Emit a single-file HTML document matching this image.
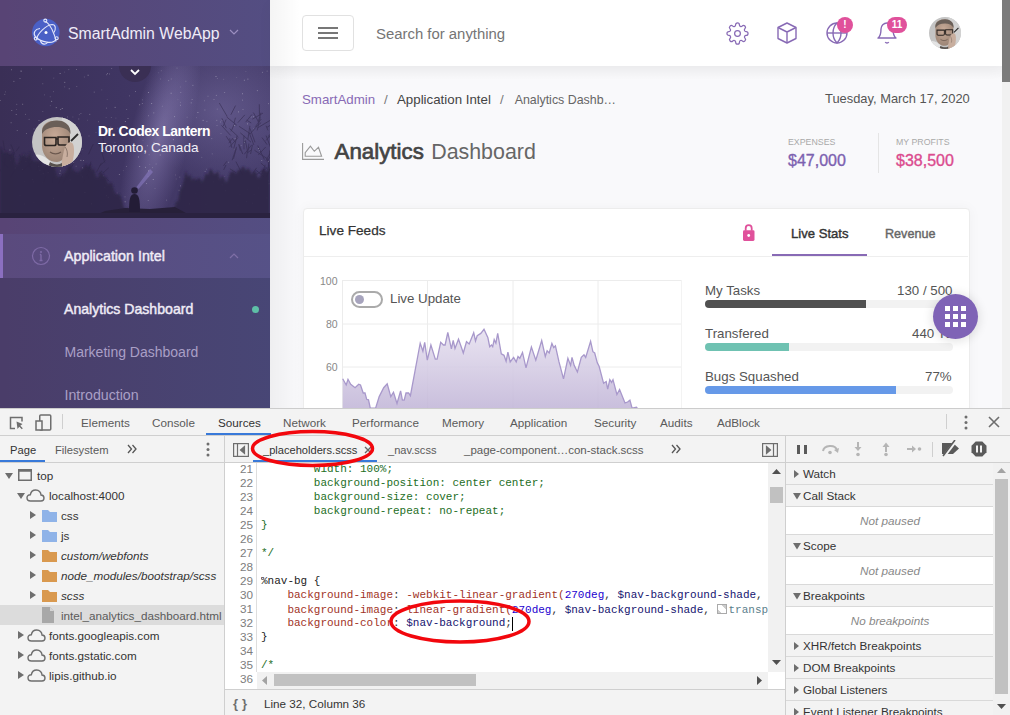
<!DOCTYPE html>
<html><head><meta charset="utf-8">
<style>
*{margin:0;padding:0;box-sizing:border-box}
html,body{width:1010px;height:715px;overflow:hidden;background:#f9f9fb;font-family:"Liberation Sans",sans-serif;position:relative}
.a{position:absolute;white-space:nowrap}
</style></head><body>
<div class="a" style="left:0px;top:0px;width:270px;height:66px;background:linear-gradient(270deg,rgba(51,148,225,.12),rgba(51,148,225,0)) #584475;"></div>
<div class="a" style="left:0;top:66px;width:270px;height:152px;overflow:hidden;background:linear-gradient(90deg,#3a2f56 0%,#3f3562 45%,#483f6e 100%)"><svg width="270" height="152" style="position:absolute;left:0;top:0"><defs>
<filter id="bl" x="-10%" y="-10%" width="120%" height="120%"><feGaussianBlur stdDeviation="1.3"/></filter>
<filter id="bl2"><feGaussianBlur stdDeviation="0.5"/></filter>
<radialGradient id="mw"><stop offset="0" stop-color="#a296cc" stop-opacity=".5"/><stop offset=".55" stop-color="#9286c0" stop-opacity=".25"/><stop offset="1" stop-color="#9286c0" stop-opacity="0"/></radialGradient>
<radialGradient id="mw2"><stop offset="0" stop-color="#8c82ba" stop-opacity=".38"/><stop offset="1" stop-color="#8c82ba" stop-opacity="0"/></radialGradient>
</defs>
<ellipse cx="220" cy="45" rx="80" ry="70" fill="url(#mw2)"/>
<ellipse cx="160" cy="70" rx="30" ry="120" fill="url(#mw)" transform="rotate(14 160 70)"/>
<rect x="64.4" y="15.9" width="0.8" height="0.8" fill="#fff" opacity="0.51"/><rect x="211.8" y="87.5" width="0.8" height="0.8" fill="#fff" opacity="0.29"/><rect x="73.3" y="95.9" width="0.8" height="0.8" fill="#fff" opacity="0.38"/><rect x="159.8" y="88.6" width="0.8" height="0.8" fill="#fff" opacity="0.45"/><rect x="51.3" y="34.9" width="0.8" height="0.8" fill="#fff" opacity="0.54"/><rect x="247.2" y="123.0" width="0.8" height="0.8" fill="#fff" opacity="0.17"/><rect x="16.4" y="37.9" width="0.8" height="0.8" fill="#fff" opacity="0.32"/><rect x="168.3" y="14.3" width="0.8" height="0.8" fill="#fff" opacity="0.37"/><rect x="19.6" y="12.1" width="0.8" height="0.8" fill="#fff" opacity="0.42"/><rect x="148.7" y="88.4" width="0.8" height="0.8" fill="#fff" opacity="0.30"/><rect x="129.2" y="29.5" width="0.8" height="0.8" fill="#fff" opacity="0.29"/><rect x="201.1" y="117.4" width="0.8" height="0.8" fill="#fff" opacity="0.18"/><rect x="32.3" y="113.3" width="0.8" height="0.8" fill="#fff" opacity="0.40"/><rect x="207.6" y="29.8" width="0.8" height="0.8" fill="#fff" opacity="0.32"/><rect x="69.7" y="113.4" width="0.8" height="0.8" fill="#fff" opacity="0.30"/><rect x="176.5" y="138.5" width="0.8" height="0.8" fill="#fff" opacity="0.28"/><rect x="148.1" y="104.5" width="0.8" height="0.8" fill="#fff" opacity="0.52"/><rect x="115.5" y="51.7" width="0.8" height="0.8" fill="#fff" opacity="0.19"/><rect x="236.3" y="11.0" width="0.8" height="0.8" fill="#fff" opacity="0.18"/><rect x="152.3" y="67.9" width="0.8" height="0.8" fill="#fff" opacity="0.42"/><rect x="80.7" y="108.6" width="0.8" height="0.8" fill="#fff" opacity="0.18"/><rect x="57.6" y="92.7" width="0.8" height="0.8" fill="#fff" opacity="0.18"/><rect x="82.0" y="101.5" width="0.8" height="0.8" fill="#fff" opacity="0.43"/><rect x="76.4" y="20.0" width="0.8" height="0.8" fill="#fff" opacity="0.29"/><rect x="196.0" y="51.3" width="0.8" height="0.8" fill="#fff" opacity="0.20"/><rect x="191.5" y="79.7" width="0.8" height="0.8" fill="#fff" opacity="0.52"/><rect x="253.8" y="127.9" width="0.8" height="0.8" fill="#fff" opacity="0.33"/><rect x="216.8" y="42.7" width="0.8" height="0.8" fill="#fff" opacity="0.28"/><rect x="107.9" y="130.9" width="0.8" height="0.8" fill="#fff" opacity="0.51"/><rect x="67.0" y="50.6" width="0.8" height="0.8" fill="#fff" opacity="0.30"/><rect x="98.1" y="55.4" width="0.8" height="0.8" fill="#fff" opacity="0.31"/><rect x="52.6" y="78.9" width="0.8" height="0.8" fill="#fff" opacity="0.47"/><rect x="146.0" y="117.1" width="0.8" height="0.8" fill="#fff" opacity="0.38"/><rect x="47.7" y="106.3" width="0.8" height="0.8" fill="#fff" opacity="0.50"/><rect x="76.0" y="3.1" width="0.8" height="0.8" fill="#fff" opacity="0.36"/><rect x="146.9" y="79.4" width="0.8" height="0.8" fill="#fff" opacity="0.54"/><rect x="175.8" y="112.6" width="0.8" height="0.8" fill="#fff" opacity="0.18"/><rect x="147.6" y="110.3" width="0.8" height="0.8" fill="#fff" opacity="0.18"/><rect x="22.1" y="103.2" width="0.8" height="0.8" fill="#fff" opacity="0.51"/><rect x="22.9" y="88.8" width="0.8" height="0.8" fill="#fff" opacity="0.21"/><rect x="201.4" y="90.9" width="0.8" height="0.8" fill="#fff" opacity="0.25"/><rect x="59.5" y="107.1" width="0.8" height="0.8" fill="#fff" opacity="0.36"/><rect x="206.5" y="55.2" width="0.8" height="0.8" fill="#fff" opacity="0.29"/><rect x="261.4" y="94.1" width="0.8" height="0.8" fill="#fff" opacity="0.35"/><rect x="145.1" y="100.9" width="0.8" height="0.8" fill="#fff" opacity="0.43"/><rect x="247.0" y="57.5" width="0.8" height="0.8" fill="#fff" opacity="0.48"/><rect x="180.0" y="119.5" width="0.8" height="0.8" fill="#fff" opacity="0.47"/><rect x="225.1" y="124.4" width="0.8" height="0.8" fill="#fff" opacity="0.53"/><rect x="172.9" y="73.3" width="0.8" height="0.8" fill="#fff" opacity="0.43"/><rect x="216.6" y="59.0" width="0.8" height="0.8" fill="#fff" opacity="0.32"/><rect x="39.5" y="103.8" width="0.8" height="0.8" fill="#fff" opacity="0.55"/><rect x="101.4" y="23.5" width="0.8" height="0.8" fill="#fff" opacity="0.23"/><rect x="114.7" y="40.9" width="0.8" height="0.8" fill="#fff" opacity="0.54"/><rect x="16.0" y="43.2" width="0.8" height="0.8" fill="#fff" opacity="0.20"/><rect x="175.0" y="108.6" width="0.8" height="0.8" fill="#fff" opacity="0.22"/><rect x="16.8" y="64.2" width="0.8" height="0.8" fill="#fff" opacity="0.38"/><rect x="245.5" y="5.1" width="0.8" height="0.8" fill="#fff" opacity="0.19"/><rect x="49.8" y="30.4" width="0.8" height="0.8" fill="#fff" opacity="0.24"/><rect x="193.7" y="83.3" width="0.8" height="0.8" fill="#fff" opacity="0.24"/><rect x="49.9" y="39.3" width="0.8" height="0.8" fill="#fff" opacity="0.22"/><rect x="204.5" y="43.6" width="0.8" height="0.8" fill="#fff" opacity="0.37"/><rect x="220.6" y="67.1" width="0.8" height="0.8" fill="#fff" opacity="0.25"/><rect x="239.6" y="128.0" width="0.8" height="0.8" fill="#fff" opacity="0.29"/><rect x="147.8" y="134.0" width="0.8" height="0.8" fill="#fff" opacity="0.34"/><rect x="59.7" y="7.0" width="0.8" height="0.8" fill="#fff" opacity="0.53"/><rect x="216.4" y="53.9" width="0.8" height="0.8" fill="#fff" opacity="0.36"/><rect x="139.3" y="38.4" width="0.8" height="0.8" fill="#fff" opacity="0.55"/><rect x="177.5" y="33.3" width="0.8" height="0.8" fill="#fff" opacity="0.15"/><rect x="127.6" y="52.0" width="0.8" height="0.8" fill="#fff" opacity="0.47"/><rect x="192.6" y="84.9" width="0.8" height="0.8" fill="#fff" opacity="0.21"/><rect x="42.4" y="45.1" width="0.8" height="0.8" fill="#fff" opacity="0.25"/><rect x="234.7" y="72.3" width="0.8" height="0.8" fill="#fff" opacity="0.40"/><rect x="268.1" y="37.3" width="0.8" height="0.8" fill="#fff" opacity="0.36"/><rect x="40.7" y="107.9" width="0.8" height="0.8" fill="#fff" opacity="0.15"/><rect x="221.8" y="118.5" width="0.8" height="0.8" fill="#fff" opacity="0.48"/><rect x="22.3" y="37.8" width="0.8" height="0.8" fill="#fff" opacity="0.44"/><rect x="26.2" y="67.2" width="0.8" height="0.8" fill="#fff" opacity="0.34"/><rect x="258.0" y="82.1" width="0.8" height="0.8" fill="#fff" opacity="0.49"/><rect x="82.0" y="110.5" width="0.8" height="0.8" fill="#fff" opacity="0.32"/><rect x="247.5" y="12.7" width="0.8" height="0.8" fill="#fff" opacity="0.48"/><rect x="56.3" y="76.1" width="0.8" height="0.8" fill="#fff" opacity="0.36"/><rect x="42.5" y="116.5" width="0.8" height="0.8" fill="#fff" opacity="0.27"/><rect x="83.9" y="10.6" width="0.8" height="0.8" fill="#fff" opacity="0.27"/><rect x="126.2" y="100.1" width="0.8" height="0.8" fill="#fff" opacity="0.29"/><rect x="185.5" y="14.8" width="0.8" height="0.8" fill="#fff" opacity="0.31"/><rect x="124.7" y="135.4" width="0.8" height="0.8" fill="#fff" opacity="0.48"/><rect x="176.6" y="1.7" width="0.8" height="0.8" fill="#fff" opacity="0.30"/><rect x="191.7" y="33.2" width="0.8" height="0.8" fill="#fff" opacity="0.38"/><rect x="123.7" y="1.5" width="0.8" height="0.8" fill="#fff" opacity="0.55"/><rect x="215.9" y="28.9" width="0.8" height="0.8" fill="#fff" opacity="0.40"/><rect x="78.4" y="52.6" width="0.8" height="0.8" fill="#fff" opacity="0.37"/><rect x="80.5" y="47.2" width="0.8" height="0.8" fill="#fff" opacity="0.31"/><rect x="180.0" y="35.9" width="0.8" height="0.8" fill="#fff" opacity="0.23"/><rect x="197.5" y="46.1" width="0.8" height="0.8" fill="#fff" opacity="0.53"/><rect x="152.0" y="101.3" width="0.8" height="0.8" fill="#fff" opacity="0.28"/><rect x="223.3" y="12.9" width="0.8" height="0.8" fill="#fff" opacity="0.21"/><rect x="25.5" y="94.9" width="0.8" height="0.8" fill="#fff" opacity="0.43"/><rect x="48.6" y="56.3" width="0.8" height="0.8" fill="#fff" opacity="0.48"/><rect x="160.0" y="12.6" width="0.8" height="0.8" fill="#fff" opacity="0.24"/><rect x="42.4" y="17.4" width="0.8" height="0.8" fill="#fff" opacity="0.31"/><rect x="19.6" y="128.9" width="0.8" height="0.8" fill="#fff" opacity="0.32"/><rect x="138.1" y="90.6" width="0.8" height="0.8" fill="#fff" opacity="0.46"/><rect x="221.7" y="54.0" width="0.8" height="0.8" fill="#fff" opacity="0.28"/><rect x="111.3" y="2.2" width="0.8" height="0.8" fill="#fff" opacity="0.31"/><rect x="189.0" y="137.5" width="0.8" height="0.8" fill="#fff" opacity="0.47"/><rect x="178.3" y="85.2" width="0.8" height="0.8" fill="#fff" opacity="0.16"/><rect x="89.4" y="47.9" width="0.8" height="0.8" fill="#fff" opacity="0.41"/><rect x="28.7" y="52.9" width="0.8" height="0.8" fill="#fff" opacity="0.35"/><rect x="212.9" y="115.5" width="0.8" height="0.8" fill="#fff" opacity="0.39"/><rect x="42.8" y="107.3" width="0.8" height="0.8" fill="#fff" opacity="0.51"/><rect x="148.0" y="49.4" width="0.8" height="0.8" fill="#fff" opacity="0.35"/><rect x="38.3" y="99.9" width="0.8" height="0.8" fill="#fff" opacity="0.54"/><rect x="139.3" y="100.2" width="0.8" height="0.8" fill="#fff" opacity="0.48"/><rect x="53.2" y="132.3" width="0.8" height="0.8" fill="#fff" opacity="0.40"/><rect x="53.4" y="11.7" width="0.8" height="0.8" fill="#fff" opacity="0.25"/><rect x="155.7" y="97.6" width="0.8" height="0.8" fill="#fff" opacity="0.28"/><rect x="250.8" y="50.6" width="0.8" height="0.8" fill="#fff" opacity="0.34"/><rect x="33.5" y="136.3" width="0.8" height="0.8" fill="#fff" opacity="0.20"/><rect x="244.1" y="76.1" width="0.8" height="0.8" fill="#fff" opacity="0.37"/><rect x="151.3" y="37.0" width="0.8" height="0.8" fill="#fff" opacity="0.51"/><rect x="267.9" y="114.5" width="0.8" height="0.8" fill="#fff" opacity="0.39"/><rect x="33.1" y="115.5" width="0.8" height="0.8" fill="#fff" opacity="0.27"/><rect x="242.2" y="33.7" width="0.8" height="0.8" fill="#fff" opacity="0.38"/><rect x="224.3" y="26.0" width="0.8" height="0.8" fill="#fff" opacity="0.37"/><rect x="20.6" y="4.5" width="0.8" height="0.8" fill="#fff" opacity="0.22"/><rect x="266.5" y="131.5" width="0.8" height="0.8" fill="#fff" opacity="0.41"/><rect x="83.1" y="94.0" width="0.8" height="0.8" fill="#fff" opacity="0.45"/><rect x="103.0" y="82.9" width="0.8" height="0.8" fill="#fff" opacity="0.47"/><rect x="4.4" y="27.9" width="0.8" height="0.8" fill="#fff" opacity="0.34"/><rect x="38.6" y="54.1" width="0.8" height="0.8" fill="#fff" opacity="0.38"/><rect x="46.9" y="72.8" width="0.8" height="0.8" fill="#fff" opacity="0.26"/><rect x="153.4" y="46.5" width="0.8" height="0.8" fill="#fff" opacity="0.41"/><rect x="10.2" y="93.9" width="0.8" height="0.8" fill="#fff" opacity="0.21"/><rect x="259.0" y="84.0" width="0.8" height="0.8" fill="#fff" opacity="0.34"/><rect x="111.1" y="87.3" width="0.8" height="0.8" fill="#fff" opacity="0.43"/><rect x="204.7" y="105.2" width="0.8" height="0.8" fill="#fff" opacity="0.34"/><rect x="268.5" y="117.4" width="0.8" height="0.8" fill="#fff" opacity="0.49"/><rect x="110.4" y="60.8" width="0.8" height="0.8" fill="#fff" opacity="0.38"/><rect x="244.4" y="73.6" width="0.8" height="0.8" fill="#fff" opacity="0.36"/><rect x="116.7" y="126.6" width="0.8" height="0.8" fill="#fff" opacity="0.28"/><rect x="14.8" y="101.6" width="0.8" height="0.8" fill="#fff" opacity="0.51"/><rect x="197.6" y="83.7" width="0.8" height="0.8" fill="#fff" opacity="0.45"/><rect x="82.3" y="83.1" width="0.8" height="0.8" fill="#fff" opacity="0.18"/><rect x="33.6" y="62.6" width="0.8" height="0.8" fill="#fff" opacity="0.35"/><rect x="107.1" y="7.3" width="0.8" height="0.8" fill="#fff" opacity="0.43"/><rect x="142.1" y="33.5" width="0.8" height="0.8" fill="#fff" opacity="0.27"/><rect x="106.8" y="33.0" width="0.8" height="0.8" fill="#fff" opacity="0.18"/><rect x="246.0" y="135.3" width="0.8" height="0.8" fill="#fff" opacity="0.42"/><rect x="234.0" y="59.0" width="0.8" height="0.8" fill="#fff" opacity="0.47"/><rect x="59.9" y="104.5" width="0.8" height="0.8" fill="#fff" opacity="0.38"/><rect x="243.9" y="13.8" width="0.8" height="0.8" fill="#fff" opacity="0.47"/><rect x="33.4" y="75.3" width="0.8" height="0.8" fill="#fff" opacity="0.53"/><rect x="0.2" y="34.2" width="0.8" height="0.8" fill="#fff" opacity="0.27"/><rect x="87.7" y="8.8" width="0.8" height="0.8" fill="#fff" opacity="0.51"/><rect x="220.2" y="55.6" width="0.8" height="0.8" fill="#fff" opacity="0.29"/><rect x="158.1" y="6.4" width="0.8" height="0.8" fill="#fff" opacity="0.16"/><rect x="242.6" y="43.1" width="0.8" height="0.8" fill="#fff" opacity="0.35"/><rect x="252.2" y="136.8" width="0.8" height="0.8" fill="#fff" opacity="0.34"/><rect x="55.8" y="41.3" width="0.8" height="0.8" fill="#fff" opacity="0.52"/><rect x="242.1" y="27.4" width="0.8" height="0.8" fill="#fff" opacity="0.49"/><rect x="95.6" y="66.1" width="0.8" height="0.8" fill="#fff" opacity="0.22"/><rect x="237.5" y="139.4" width="0.8" height="0.8" fill="#fff" opacity="0.23"/><rect x="170.7" y="26.8" width="0.8" height="0.8" fill="#fff" opacity="0.50"/><rect x="13.5" y="14.9" width="0.8" height="0.8" fill="#fff" opacity="0.44"/><rect x="84.5" y="126.0" width="0.8" height="0.8" fill="#fff" opacity="0.50"/><rect x="192.5" y="18.9" width="0.8" height="0.8" fill="#fff" opacity="0.43"/><rect x="253.2" y="62.3" width="0.8" height="0.8" fill="#fff" opacity="0.18"/><rect x="60.3" y="43.0" width="0.8" height="0.8" fill="#fff" opacity="0.43"/><rect x="53.0" y="25.3" width="0.8" height="0.8" fill="#fff" opacity="0.24"/><rect x="179.4" y="110.7" width="0.8" height="0.8" fill="#fff" opacity="0.30"/><rect x="178.7" y="123.8" width="0.8" height="0.8" fill="#fff" opacity="0.39"/><rect x="61.8" y="42.1" width="0.8" height="0.8" fill="#fff" opacity="0.52"/><rect x="180.1" y="38.8" width="0.8" height="0.8" fill="#fff" opacity="0.41"/><rect x="24.3" y="137.6" width="0.8" height="0.8" fill="#fff" opacity="0.33"/><rect x="142.6" y="74.3" width="0.8" height="0.8" fill="#fff" opacity="0.17"/><rect x="161.9" y="39.8" width="0.8" height="0.8" fill="#fff" opacity="0.25"/><rect x="216.9" y="12.2" width="0.8" height="0.8" fill="#fff" opacity="0.26"/><rect x="204.0" y="34.4" width="0.8" height="0.8" fill="#fff" opacity="0.26"/><rect x="148.0" y="26.1" width="0.8" height="0.8" fill="#fff" opacity="0.51"/><rect x="266.7" y="4.7" width="0.8" height="0.8" fill="#fff" opacity="0.33"/><rect x="202.7" y="53.9" width="0.8" height="0.8" fill="#fff" opacity="0.52"/><rect x="135.0" y="25.2" width="0.8" height="0.8" fill="#fff" opacity="0.37"/><rect x="174.1" y="50.3" width="0.8" height="0.8" fill="#fff" opacity="0.41"/><rect x="211.4" y="72.3" width="0.8" height="0.8" fill="#fff" opacity="0.35"/><rect x="228.3" y="95.8" width="0.8" height="0.8" fill="#fff" opacity="0.36"/><rect x="256.9" y="24.3" width="0.8" height="0.8" fill="#fff" opacity="0.46"/><rect x="44.6" y="85.1" width="0.8" height="0.8" fill="#fff" opacity="0.24"/><rect x="118.9" y="108.2" width="0.8" height="0.8" fill="#fff" opacity="0.46"/><rect x="213.6" y="33.0" width="0.8" height="0.8" fill="#fff" opacity="0.35"/><rect x="59.7" y="81.2" width="0.8" height="0.8" fill="#fff" opacity="0.35"/><rect x="9.5" y="83.6" width="0.8" height="0.8" fill="#fff" opacity="0.44"/><rect x="154.6" y="122.2" width="0.8" height="0.8" fill="#fff" opacity="0.22"/><rect x="41.0" y="2.5" width="0.8" height="0.8" fill="#fff" opacity="0.35"/><rect x="117.4" y="61.8" width="0.8" height="0.8" fill="#fff" opacity="0.26"/><rect x="215.6" y="10.2" width="0.8" height="0.8" fill="#fff" opacity="0.51"/><rect x="153.6" y="76.1" width="0.8" height="0.8" fill="#fff" opacity="0.47"/><rect x="64.3" y="20.5" width="0.8" height="0.8" fill="#fff" opacity="0.27"/><rect x="11.4" y="44.0" width="0.8" height="0.8" fill="#fff" opacity="0.40"/><rect x="141.9" y="37.1" width="0.8" height="0.8" fill="#fff" opacity="0.39"/><rect x="23.9" y="114.9" width="0.8" height="0.8" fill="#fff" opacity="0.22"/><rect x="68.8" y="22.4" width="0.8" height="0.8" fill="#fff" opacity="0.43"/><rect x="224.3" y="110.1" width="0.8" height="0.8" fill="#fff" opacity="0.17"/><rect x="110.9" y="51.0" width="0.8" height="0.8" fill="#fff" opacity="0.24"/><rect x="262.0" y="5.9" width="0.8" height="0.8" fill="#fff" opacity="0.35"/><rect x="205.5" y="138.1" width="0.8" height="0.8" fill="#fff" opacity="0.21"/><rect x="122.9" y="104.3" width="0.8" height="0.8" fill="#fff" opacity="0.17"/><rect x="65.0" y="124.6" width="0.8" height="0.8" fill="#fff" opacity="0.21"/><rect x="106.1" y="41.7" width="0.8" height="0.8" fill="#fff" opacity="0.32"/><rect x="20.7" y="4.8" width="0.8" height="0.8" fill="#fff" opacity="0.55"/><rect x="206.1" y="102.8" width="0.8" height="0.8" fill="#fff" opacity="0.24"/><rect x="68.4" y="77.3" width="0.8" height="0.8" fill="#fff" opacity="0.25"/><rect x="124.6" y="130.5" width="0.8" height="0.8" fill="#fff" opacity="0.30"/><rect x="91.0" y="137.4" width="0.8" height="0.8" fill="#fff" opacity="0.39"/><rect x="10.7" y="56.4" width="0.8" height="0.8" fill="#fff" opacity="0.41"/><rect x="15.8" y="48.0" width="0.8" height="0.8" fill="#fff" opacity="0.43"/><rect x="233.4" y="82.7" width="0.8" height="0.8" fill="#fff" opacity="0.50"/><rect x="124.9" y="55.0" width="0.8" height="0.8" fill="#fff" opacity="0.49"/><rect x="102.9" y="109.4" width="0.8" height="0.8" fill="#fff" opacity="0.24"/><rect x="93.8" y="25.7" width="0.8" height="0.8" fill="#fff" opacity="0.37"/><rect x="44.2" y="28.5" width="0.8" height="0.8" fill="#fff" opacity="0.24"/><rect x="126.3" y="43.2" width="0.8" height="0.8" fill="#fff" opacity="0.33"/><rect x="268.2" y="95.1" width="0.8" height="0.8" fill="#fff" opacity="0.50"/><rect x="55.2" y="53.6" width="0.8" height="0.8" fill="#fff" opacity="0.18"/><rect x="186.7" y="50.8" width="0.8" height="0.8" fill="#fff" opacity="0.26"/><rect x="5.0" y="25.5" width="0.8" height="0.8" fill="#fff" opacity="0.25"/><rect x="106.1" y="129.3" width="0.8" height="0.8" fill="#fff" opacity="0.44"/><rect x="72.5" y="50.6" width="0.8" height="0.8" fill="#fff" opacity="0.21"/><rect x="252.9" y="50.4" width="0.8" height="0.8" fill="#fff" opacity="0.46"/><rect x="195.3" y="127.0" width="0.8" height="0.8" fill="#fff" opacity="0.16"/><rect x="87.0" y="53.8" width="0.8" height="0.8" fill="#fff" opacity="0.18"/><rect x="238.2" y="45.5" width="0.8" height="0.8" fill="#fff" opacity="0.46"/><rect x="140.2" y="7.7" width="0.8" height="0.8" fill="#fff" opacity="0.31"/><rect x="64.3" y="5.7" width="0.8" height="0.8" fill="#fff" opacity="0.21"/><rect x="160.8" y="4.4" width="0.8" height="0.8" fill="#fff" opacity="0.27"/><rect x="114.5" y="76.2" width="0.8" height="0.8" fill="#fff" opacity="0.20"/><rect x="190.8" y="36.5" width="0.8" height="0.8" fill="#fff" opacity="0.44"/><rect x="179.9" y="20.6" width="0.8" height="0.8" fill="#fff" opacity="0.23"/><rect x="75.7" y="99.8" width="0.8" height="0.8" fill="#fff" opacity="0.31"/><rect x="104.4" y="121.2" width="0.8" height="0.8" fill="#fff" opacity="0.24"/><rect x="78.9" y="48.3" width="0.8" height="0.8" fill="#fff" opacity="0.24"/><rect x="11.0" y="3.4" width="0.8" height="0.8" fill="#fff" opacity="0.40"/><rect x="152.8" y="113.2" width="0.8" height="0.8" fill="#fff" opacity="0.54"/><rect x="80.5" y="93.9" width="0.8" height="0.8" fill="#fff" opacity="0.52"/><rect x="58.4" y="96.5" width="0.8" height="0.8" fill="#fff" opacity="0.42"/><rect x="257.9" y="121.6" width="0.8" height="0.8" fill="#fff" opacity="0.24"/><rect x="170.8" y="12.6" width="0.8" height="0.8" fill="#fff" opacity="0.32"/><rect x="106.0" y="8.4" width="0.8" height="0.8" fill="#fff" opacity="0.30"/><rect x="88.6" y="69.6" width="0.8" height="0.8" fill="#fff" opacity="0.26"/><rect x="42.8" y="56.3" width="0.8" height="0.8" fill="#fff" opacity="0.34"/><rect x="45.0" y="93.1" width="0.8" height="0.8" fill="#fff" opacity="0.25"/><rect x="25.1" y="47.9" width="0.8" height="0.8" fill="#fff" opacity="0.32"/><rect x="40.7" y="81.6" width="0.8" height="0.8" fill="#fff" opacity="0.43"/><rect x="149.4" y="98.0" width="0.8" height="0.8" fill="#fff" opacity="0.16"/><rect x="105.7" y="51.0" width="0.8" height="0.8" fill="#fff" opacity="0.18"/><rect x="109.2" y="7.6" width="0.8" height="0.8" fill="#fff" opacity="0.35"/><rect x="158.2" y="65.7" width="0.8" height="0.8" fill="#fff" opacity="0.28"/><rect x="68.4" y="3.3" width="0.8" height="0.8" fill="#fff" opacity="0.29"/><rect x="240.8" y="79.2" width="0.8" height="0.8" fill="#fff" opacity="0.25"/><rect x="180.4" y="26.0" width="0.8" height="0.8" fill="#fff" opacity="0.34"/><rect x="166.1" y="133.7" width="0.8" height="0.8" fill="#fff" opacity="0.30"/>
<path d="M269.5,104.5 l-1.7,-11.5 M227.2,50.5 l-7.9,-13.5 M257.2,64.4 l3.1,-13.7 M236.7,59.2 l-10.0,-8.2 M233.4,83.8 l3.7,-13.9 M236.0,106.7 l-6.1,-3.9 M235.5,76.5 l-3.5,-4.5 M240.4,84.6 l-1.7,-6.2 M266.5,110.8 l5.0,-11.2 M251.2,57.0 l-4.5,-2.9 M267.5,92.9 l-13.0,-8.6 M253.8,78.9 l-4.6,-12.2 M272.0,52.8 l5.5,-9.6 M267.0,95.2 l7.6,-10.2 M267.8,70.5 l9.5,-8.2 M265.6,74.7 l9.7,-9.7 M250.6,88.0 l1.8,-9.0 M252.4,53.1 l10.5,-5.9 M266.0,94.6 l4.6,-8.1 M251.0,76.2 l-10.7,-9.4 M259.5,49.9 l-0.2,-11.6 M233.5,92.7 l2.7,-10.1 M268.0,64.4 l-2.0,-4.7 M255.9,61.0 l5.3,-4.4 M255.0,76.3 l-5.0,-13.9 M255.3,60.7 l6.0,-7.7 M267.7,104.3 l1.8,-9.1 M237.8,56.7 l7.0,-7.8 M264.4,93.5 l-6.7,-13.9 M230.5,76.8 l-4.4,-6.7 M242.7,88.0 l-3.7,-9.7 M264.0,110.9 l-7.6,-6.4 M223.6,103.9 l2.4,-4.9 M250.5,67.8 l-11.5,-7.5 M228.8,77.1 l3.4,-4.0 M233.9,57.0 l1.6,-5.3 M244.3,88.3 l7.5,-9.6 M269.9,91.8 l-0.2,-7.2 M230.9,48.7 l4.6,-9.1 M231.0,65.4 l3.7,-8.0 M248.0,87.3 l-2.7,-13.0 M261.6,106.0 l4.8,-3.6 M258.1,56.3 l2.8,-9.6 M267.5,72.1 l8.2,-7.7 M261.8,108.4 l3.4,-9.5 M232.2,94.2 l4.4,-13.3 M257.9,61.7 l12.8,-7.7 M270.9,82.4 l-4.8,-12.8 M267.5,102.8 l-6.7,-5.8 M244.0,83.2 l-0.1,-13.5 M223.4,99.8 l3.5,-4.5 M230.6,69.4 l-9.2,-10.1 M229.4,81.1 l8.7,-9.6 M256.5,108.5 l8.6,-5.9 M226.3,62.2 l-4.4,-9.9 M258.4,88.9 l7.3,-7.9 M250.0,67.9 l6.2,-6.8 M267.0,61.3 l12.1,-7.7 M248.2,84.7 l0.7,-7.2 M247.2,86.7 l4.5,-2.8 M247.8,73.6 l2.1,-13.7 M246.6,92.2 l0.6,-5.7 M242.7,109.2 l-6.8,-13.6 M245.7,56.1 l6.2,-7.6 M267.0,78.5 l-5.0,-6.9 M252.9,107.2 l3.7,-5.3 M223.1,60.4 l3.0,-6.9 M238.1,70.7 l-8.6,-8.2 M258.5,55.9 l-5.1,-9.3 M231.9,81.9 l-2.3,-9.5" stroke="#2d2545" stroke-width="0.9" opacity=".55" fill="none" filter="url(#bl2)"/>
<path d="M45.5,99.2 l-2.4,-4.7 M69.4,103.5 l4.8,-6.7 M67.3,112.3 l2.4,-5.3 M89.2,114.1 l-1.9,-6.2 M101.5,86.7 l7.5,-9.3 M14.7,87.6 l-3.7,-9.1 M10.7,111.3 l3.6,-6.4 M13.9,94.1 l-6.8,-6.6 M22.1,105.3 l8.2,-7.7 M12.7,98.2 l0.3,-10.1 M75.4,85.6 l-2.8,-3.6 M4.1,100.1 l1.1,-8.0 M16.1,85.4 l3.2,-4.7 M108.9,115.1 l-3.2,-3.6 M104.7,96.5 l-2.7,-9.7 M51.4,98.6 l1.4,-7.3 M1.5,106.0 l-5.4,-9.3 M49.9,107.6 l-3.5,-6.4 M18.2,98.5 l2.6,-3.2 M88.2,106.2 l2.6,-10.6 M44.5,102.0 l6.0,-5.4 M88.5,88.3 l4.8,-10.2 M85.6,110.6 l4.6,-5.6 M96.8,105.8 l4.6,-9.0 M44.6,106.9 l-1.1,-4.4 M51.6,78.4 l1.7,-6.6 M68.6,87.3 l3.5,-11.0 M37.2,104.4 l0.7,-8.5 M42.9,118.0 l3.2,-8.5 M83.8,117.2 l0.9,-4.1 M81.3,88.3 l-4.9,-5.3 M21.5,93.0 l-1.9,-4.4 M99.6,100.0 l5.9,-5.5 M62.5,117.8 l4.7,-7.8 M8.4,101.9 l-6.9,-7.4 M102.3,84.4 l-4.0,-6.7 M54.5,102.4 l3.1,-3.2 M46.3,99.1 l-1.8,-8.6 M31.4,104.2 l-2.9,-8.0 M78.8,89.8 l-1.6,-3.8 M4.7,84.3 l-1.7,-9.9 M98.7,107.9 l3.3,-2.9 M103.9,80.9 l-1.1,-11.2 M52.5,116.9 l0.4,-5.9 M103.1,106.9 l5.7,-5.2 M89.8,102.1 l1.1,-4.8 M50.1,86.1 l0.3,-4.4 M13.7,95.7 l-0.5,-9.3 M28.8,101.3 l3.5,-6.5 M58.4,117.9 l4.7,-10.6" stroke="#2d2545" stroke-width="0.9" opacity=".5" fill="none" filter="url(#bl2)"/>
<path d="M0,152 L0.0,81.6 L2.0,83.7 L4.0,87.8 L6.0,85.3 L8.0,86.9 L10.0,88.7 L12.0,86.7 L14.0,90.5 L16.0,98.8 L18.0,98.2 L20.0,90.6 L22.0,90.4 L24.0,87.2 L26.0,91.9 L28.0,90.6 L30.0,85.6 L32.0,94.0 L34.0,95.2 L36.0,94.6 L38.0,96.2 L40.0,94.5 L42.0,95.1 L44.0,100.4 L46.0,97.4 L48.0,98.5 L50.0,98.3 L52.0,95.4 L54.0,97.2 L56.0,106.4 L58.0,111.5 L60.0,110.0 L62.0,110.4 L64.0,107.2 L66.0,105.4 L68.0,100.8 L70.0,97.5 L72.0,103.1 L74.0,104.6 L76.0,105.7 L78.0,106.8 L80.0,104.5 L82.0,103.1 L84.0,101.6 L86.0,97.5 L88.0,101.4 L90.0,98.4 L92.0,103.7 L94.0,102.9 L96.0,110.7 L98.0,112.0 L100.0,105.9 L102.0,106.7 L104.0,110.5 L106.0,111.3 L108.0,118.3 L110.0,116.7 L112.0,117.1 L114.0,124.5 L116.0,128.7 L118.0,127.7 L120.0,129.2 L122.0,134.2 L124.0,142.2 L126.0,143.6 L128.0,141.4 L128,152 Z" fill="#2e2646" opacity=".88" filter="url(#bl)"/>
<path d="M172,152 L172.0,150.0 L174.0,142.4 L176.0,135.7 L178.0,135.2 L180.0,123.8 L182.0,120.5 L184.0,113.2 L186.0,105.1 L188.0,111.4 L190.0,108.5 L192.0,114.4 L194.0,111.4 L196.0,114.4 L198.0,112.4 L200.0,111.9 L202.0,115.9 L204.0,112.6 L206.0,106.7 L208.0,109.6 L210.0,103.1 L212.0,104.2 L214.0,108.2 L216.0,107.6 L218.0,104.9 L220.0,114.0 L222.0,109.7 L224.0,111.7 L226.0,116.9 L228.0,113.6 L230.0,106.6 L232.0,105.6 L234.0,105.4 L236.0,108.2 L238.0,103.7 L240.0,104.6 L242.0,101.1 L244.0,100.8 L246.0,104.8 L248.0,101.9 L250.0,104.3 L252.0,108.6 L254.0,104.9 L256.0,105.9 L258.0,112.2 L260.0,110.8 L262.0,104.8 L264.0,102.4 L266.0,104.9 L268.0,105.1 L270.0,98.6 L270,152 Z" fill="#2e2646" opacity=".9" filter="url(#bl)"/>
<path d="M90,152 L105,145 L125,142 L150,143 L175,141 L195,152 Z" fill="#272039"/>
<path d="M129,146 C129,133 130,128 134.5,128 C139,128 140,133 140,146 Z" fill="#231c36"/>
<circle cx="134.5" cy="124.5" r="3.3" fill="#231c36"/>
<path d="M136.5,121 L150,103 L153,106 L138.5,123 Z" fill="#a08fe0" opacity=".4" filter="url(#bl2)"/>
<rect x="0" y="147" width="270" height="5" fill="#2a2240"/>
</svg></div>
<div class="a" style="left:0px;top:218px;width:270px;height:16px;background:linear-gradient(270deg,rgba(51,148,225,.12),rgba(51,148,225,0)) #584475;"></div>
<div class="a" style="left:0px;top:234px;width:270px;height:174px;background:linear-gradient(270deg,rgba(51,148,225,.1),rgba(51,148,225,0)) #4a3d69;"></div>
<div class="a" style="left:0px;top:234px;width:270px;height:44px;background:linear-gradient(270deg,rgba(51,148,225,.1),rgba(51,148,225,0)) #5a4a7d;"></div>
<div class="a" style="left:0px;top:234px;width:3px;height:44px;background:#8b6fc0;"></div>
<svg class="a" style="left:31px;top:18px" width="30" height="30" viewBox="0 0 30 30">
<circle cx="14.8" cy="14.5" r="13.8" fill="#4a60c6"/>
<g fill="none" stroke="#e3e6fa" stroke-width="1.1">
<path d="M14.3 3.4 C19 5 24 17 25 23.5"/>
<path d="M25.5 21 C22 27 10 24 4.5 19 C1.5 15 4 11 9 10.5"/>
<path d="M5.5 21.5 C6 16 15 7 21 6.5 C25 6.5 25 11 23 14.5"/>
<path d="M9.5 23 C11 27 15 27 17 24"/>
<circle cx="14.3" cy="2.6" r="1.5"/><circle cx="4.8" cy="20.6" r="1.5"/><circle cx="25.7" cy="20.3" r="1.5"/>
</g><circle cx="15" cy="14.5" r="1.5" fill="#fff"/></svg>
<div class="a" style="left:68px;top:26.13px;font-size:15.8px;line-height:15.8px;color:#f0ecf8;font-weight:normal;font-family:'Liberation Sans',sans-serif;">SmartAdmin WebApp</div>
<svg class="a" style="left:229px;top:29px" width="10" height="6"><path d="M1,1 L5,5 L9,1" stroke="#9c8fc0" fill="none" stroke-width="1.2"/></svg>
<div class="a" style="left:119px;top:66px;width:32px;height:16px;border-radius:0 0 16px 16px;background:#3a2f54"></div>
<svg class="a" style="left:130px;top:68.5px" width="10" height="7"><path d="M1,1 L5,5 L9,1" stroke="#fff" fill="none" stroke-width="1.8"/></svg>
<svg class="a" style="left:32px;top:117px" width="50" height="50" viewBox="0 0 50 50"><defs><clipPath id="av"><circle cx="25" cy="25" r="25"/></clipPath><radialGradient id="avf" cx=".45" cy=".4" r=".6"><stop offset="0" stop-color="#c9ab98"/><stop offset="1" stop-color="#9c8576"/></radialGradient></defs>
<g clip-path="url(#av)">
<rect width="50" height="50" fill="#c4c4c4"/>
<rect x="30" width="20" height="50" fill="#d2d2d2"/>
<path d="M0,50 L2,38 C8,36 14,40 20,46 L22,50 Z" fill="#e4e4e4"/>
<path d="M10,14 C10,6 18,3 26,4 C34,5 39,10 38,18 L38,30 C37,38 32,44 25,45 C17,45 11,39 10,30 Z" fill="url(#avf)"/>
<path d="M10,17 C9,8 17,3.5 25,3.5 C33,3.5 39,8 38.5,17 C36,12 31,10 25,10 C18,10 13,12 10,17 Z" fill="#6a5f58"/>
<path d="M12.5,20.5 H24 V27 C24,28 23,28.5 22,28.5 H14.5 C13.5,28.5 12.5,28 12.5,27 Z M26,20 H37 V26.5 C37,27.5 36,28 35,28 H28 C27,28 26,27.5 26,26.5 Z" fill="none" stroke="#2b2522" stroke-width="1.6"/>
<path d="M24,22 H26" stroke="#2b2522" stroke-width="1.4"/>
<path d="M18,35 C21,37.5 26,37.5 29,35" fill="none" stroke="#6d5a50" stroke-width="1.2"/>
<path d="M29,50 C30,43 31,36 33,30 C35,25 39,24 41,27 C43,32 42,41 39,50 Z" fill="#c8ae9e"/>
<path d="M33,30 C35,32 36,36 35,40" fill="none" stroke="#7c6a60" stroke-width="0.8"/>
<path d="M39,24 L46,17" stroke="#2a2a2a" stroke-width="1.8"/>
<path d="M18,45 C22,48 27,48 30,46 L30,50 L16,50 Z" fill="#56504c"/>
</g></svg>
<div class="a" style="left:98px;top:124.73px;font-size:13.9px;line-height:13.9px;color:#fff;font-weight:bold;font-family:'Liberation Sans',sans-serif;letter-spacing:-0.45px">Dr. Codex Lantern</div>
<div class="a" style="left:98px;top:141.49px;font-size:13.6px;line-height:13.6px;color:#f2f0f7;font-weight:normal;font-family:'Liberation Sans',sans-serif;">Toronto, Canada</div>
<svg class="a" style="left:31px;top:246px" width="20" height="20" viewBox="0 0 20 20"><circle cx="10" cy="10" r="8.5" fill="none" stroke="#7e6aa6" stroke-width="1.2"/>
<path d="M10,8.5 L10,14.5 M8.5,14.5 L11.5,14.5 M8.8,8.5 L10,8.5" stroke="#7e6aa6" stroke-width="1.4" fill="none"/><circle cx="10" cy="6" r="1" fill="#7e6aa6"/></svg>
<div class="a" style="left:64px;top:248.90px;font-size:14.3px;line-height:14.3px;color:#efebf6;font-weight:normal;font-family:'Liberation Sans',sans-serif;-webkit-text-stroke:0.45px #efebf6">Application Intel</div>
<svg class="a" style="left:229px;top:253px" width="10" height="6"><path d="M1,5 L5,1 L9,5" stroke="#7f6fa6" fill="none" stroke-width="1.2"/></svg>
<div class="a" style="left:64px;top:302.06px;font-size:14.1px;line-height:14.1px;color:#efebf6;font-weight:normal;font-family:'Liberation Sans',sans-serif;-webkit-text-stroke:0.45px #efebf6">Analytics Dashboard</div>
<div class="a" style="left:252px;top:306px;width:7px;height:7px;border-radius:50%;background:#5ebfa7"></div>
<div class="a" style="left:64.5px;top:345.15px;font-size:14px;line-height:14px;color:#a99fc6;font-weight:normal;font-family:'Liberation Sans',sans-serif;">Marketing Dashboard</div>
<div class="a" style="left:64.5px;top:387.98px;font-size:14.2px;line-height:14.2px;color:#a99fc6;font-weight:normal;font-family:'Liberation Sans',sans-serif;">Introduction</div>
<div class="a" style="left:270px;top:0px;width:732px;height:66px;background:#fff;box-shadow:0 4px 14px rgba(0,0,0,.035)"></div>
<div class="a" style="left:270px;top:0px;width:30px;height:408px;background:linear-gradient(90deg,rgba(0,0,0,.045),rgba(0,0,0,0));"></div>
<div class="a" style="left:270px;top:66px;width:732px;height:14px;background:linear-gradient(180deg,rgba(0,0,0,.03),rgba(0,0,0,0));"></div>
<div class="a" style="left:1002px;top:0px;width:8px;height:408px;background:#f1f1f1;"></div>
<div class="a" style="left:1002px;top:0px;width:8px;height:82px;background:#7b7b7b;"></div>
<div class="a" style="left:302px;top:15px;width:52px;height:36px;border:1px solid #e1e1e1;border-radius:4px;background:#fff"></div>
<div class="a" style="left:318px;top:27px;width:20px;height:2px;background:#777;"></div>
<div class="a" style="left:318px;top:32px;width:20px;height:2px;background:#777;"></div>
<div class="a" style="left:318px;top:37px;width:20px;height:2px;background:#777;"></div>
<div class="a" style="left:376px;top:26.59px;font-size:14.9px;line-height:14.9px;color:#757575;font-weight:normal;font-family:'Liberation Sans',sans-serif;">Search for anything</div>
<svg class="a" style="left:725.5px;top:21.5px" width="23" height="23" viewBox="0 0 24 24" fill="none" stroke="#886ab5" stroke-width="1.3" stroke-linejoin="round">
<circle cx="12" cy="12" r="3"/>
<path d="M19.4 15a1.65 1.65 0 0 0 .33 1.82l.06.06a2 2 0 0 1-2.83 2.83l-.06-.06a1.65 1.65 0 0 0-1.82-.33 1.65 1.65 0 0 0-1 1.51V21a2 2 0 0 1-4 0v-.09A1.65 1.65 0 0 0 9 19.4a1.65 1.65 0 0 0-1.82.33l-.06.06a2 2 0 0 1-2.830-2.83l.06-.06a1.650 1.650 0 0 0 .33-1.82 1.65 1.65 0 0 0-1.51-1H3a2 2 0 0 1 0-4h.09A1.65 1.65 0 0 0 4.6 9a1.65 1.65 0 0 0-.33-1.82l-.06-.06a2 2 0 0 1 2.83-2.83l.06.06a1.65 1.65 0 0 0 1.82.33H9a1.65 1.65 0 0 0 1-1.51V3a2 2 0 0 1 4 0v.09a1.65 1.65 0 0 0 1 1.51 1.65 1.65 0 0 0 1.82-.33l.06-.06a2 2 0 0 1 2.83 2.83l-.06.06a1.65 1.65 0 0 0-.33 1.82V9a1.65 1.65 0 0 0 1.51 1H21a2 2 0 0 1 0 4h-.09a1.65 1.65 0 0 0-1.51 1z"/></svg>
<svg class="a" style="left:775px;top:21px" width="24" height="24" viewBox="0 0 24 24" fill="none" stroke="#886ab5" stroke-width="1.4" stroke-linejoin="round">
<path d="M12 2 L21 6.5 L21 17.5 L12 22 L3 17.5 L3 6.5 Z"/><path d="M3 6.5 L12 11 L21 6.5 M12 11 L12 22"/></svg>
<svg class="a" style="left:825px;top:21px" width="24" height="24" viewBox="0 0 24 24" fill="none" stroke="#886ab5" stroke-width="1.4">
<circle cx="12" cy="12" r="10"/><path d="M2 12 L22 12"/><path d="M12 2 C15 5 16 9 16 12 C16 15 15 19 12 22 C9 19 8 15 8 12 C8 9 9 5 12 2 Z"/></svg>
<div class="a" style="left:837px;top:17px;width:16px;height:16px;border-radius:50%;background:#e0519b;color:#fff;font-size:10px;line-height:16px;text-align:center;font-weight:bold">!</div>
<svg class="a" style="left:875px;top:21px" width="24" height="24" viewBox="0 0 24 24" fill="none" stroke="#886ab5" stroke-width="1.4" stroke-linejoin="round">
<path d="M18 8A6 6 0 0 0 6 8c0 7-3 9-3 9h18s-3-2-3-9"/><path d="M13.73 21a2 2 0 0 1-3.46 0"/></svg>
<div class="a" style="left:887px;top:17px;width:20px;height:16px;border-radius:8px;background:#e0519b;color:#fff;font-size:10px;line-height:16px;text-align:center;font-weight:bold">11</div>
<svg class="a" style="left:929px;top:17px" width="32" height="32" viewBox="0 0 50 50"><defs><clipPath id="av2"><circle cx="25" cy="25" r="25"/></clipPath><radialGradient id="av2f" cx=".45" cy=".4" r=".6"><stop offset="0" stop-color="#c9ab98"/><stop offset="1" stop-color="#9c8576"/></radialGradient></defs>
<g clip-path="url(#av2)">
<rect width="50" height="50" fill="#c4c4c4"/>
<rect x="30" width="20" height="50" fill="#d2d2d2"/>
<path d="M0,50 L2,38 C8,36 14,40 20,46 L22,50 Z" fill="#e4e4e4"/>
<path d="M10,14 C10,6 18,3 26,4 C34,5 39,10 38,18 L38,30 C37,38 32,44 25,45 C17,45 11,39 10,30 Z" fill="url(#av2f)"/>
<path d="M10,17 C9,8 17,3.5 25,3.5 C33,3.5 39,8 38.5,17 C36,12 31,10 25,10 C18,10 13,12 10,17 Z" fill="#6a5f58"/>
<path d="M12.5,20.5 H24 V27 C24,28 23,28.5 22,28.5 H14.5 C13.5,28.5 12.5,28 12.5,27 Z M26,20 H37 V26.5 C37,27.5 36,28 35,28 H28 C27,28 26,27.5 26,26.5 Z" fill="none" stroke="#2b2522" stroke-width="1.6"/>
<path d="M24,22 H26" stroke="#2b2522" stroke-width="1.4"/>
<path d="M18,35 C21,37.5 26,37.5 29,35" fill="none" stroke="#6d5a50" stroke-width="1.2"/>
<path d="M29,50 C30,43 31,36 33,30 C35,25 39,24 41,27 C43,32 42,41 39,50 Z" fill="#c8ae9e"/>
<path d="M33,30 C35,32 36,36 35,40" fill="none" stroke="#7c6a60" stroke-width="0.8"/>
<path d="M39,24 L46,17" stroke="#2a2a2a" stroke-width="1.8"/>
<path d="M18,45 C22,48 27,48 30,46 L30,50 L16,50 Z" fill="#56504c"/>
</g></svg>
<div class="a" style="left:302px;top:93.04px;font-size:13.3px;line-height:13.3px;color:#886ab5;font-weight:normal;font-family:'Liberation Sans',sans-serif;">SmartAdmin</div>
<div class="a" style="left:384px;top:93.04px;font-size:13.3px;line-height:13.3px;color:#777;font-weight:normal;font-family:'Liberation Sans',sans-serif;">/</div>
<div class="a" style="left:397px;top:93.04px;font-size:13.3px;line-height:13.3px;color:#444;font-weight:normal;font-family:'Liberation Sans',sans-serif;">Application Intel</div>
<div class="a" style="left:500px;top:93.04px;font-size:13.3px;line-height:13.3px;color:#777;font-weight:normal;font-family:'Liberation Sans',sans-serif;">/</div>
<div class="a" style="left:514.7px;top:93.80px;font-size:12.4px;line-height:12.4px;color:#666;font-weight:normal;font-family:'Liberation Sans',sans-serif;">Analytics Dashb…</div>
<div class="a" style="left:825px;top:93.38px;font-size:12.9px;line-height:12.9px;color:#555;font-weight:normal;font-family:'Liberation Sans',sans-serif;">Tuesday, March 17, 2020</div>
<svg class="a" style="left:296px;top:138px" width="36" height="28" viewBox="0 0 36 28" fill="none" stroke="#9a9a9a" stroke-width="1.1">
<path d="M6.6 5 V21.4 H28"/><path d="M9.2 18.3 V14.7 L14.4 8.2 L18.3 13.3 L22.5 9.3 L25.6 18.3 Z"/></svg>
<div class="a" style="left:334.6px;top:141.12px;font-size:22.3px;line-height:22.3px;color:#444;font-weight:normal;font-family:'Liberation Sans',sans-serif;-webkit-text-stroke:0.7px #444">Analytics</div>
<div class="a" style="left:431.2px;top:141.88px;font-size:21.4px;line-height:21.4px;color:#666;font-weight:normal;font-family:'Liberation Sans',sans-serif;">Dashboard</div>
<div class="a" style="left:788px;top:137.55px;font-size:8.8px;line-height:8.8px;color:#a9a9a9;font-weight:normal;font-family:'Liberation Sans',sans-serif;">EXPENSES</div>
<div class="a" style="left:788px;top:153.46px;font-size:16px;line-height:16px;color:#7c61b0;font-weight:normal;font-family:'Liberation Sans',sans-serif;-webkit-text-stroke:0.35px #7c61b0">$47,000</div>
<div class="a" style="left:878px;top:133px;width:1px;height:40px;background:#e5e5e5;"></div>
<div class="a" style="left:896px;top:137.55px;font-size:8.8px;line-height:8.8px;color:#a9a9a9;font-weight:normal;font-family:'Liberation Sans',sans-serif;">MY PROFITS</div>
<div class="a" style="left:896px;top:153.46px;font-size:16px;line-height:16px;color:#db4b8e;font-weight:normal;font-family:'Liberation Sans',sans-serif;-webkit-text-stroke:0.35px #db4b8e">$38,500</div>
<div class="a" style="left:303px;top:208px;width:667px;height:220px;background:#fff;border:1px solid #ececec;border-radius:4px;box-shadow:0 0 13px rgba(0,0,0,.04)"></div>
<div class="a" style="left:304px;top:256px;width:664px;height:1px;background:#eee;"></div>
<div class="a" style="left:319px;top:224.49px;font-size:13.6px;line-height:13.6px;color:#333;font-weight:normal;font-family:'Liberation Sans',sans-serif;-webkit-text-stroke:0.25px #333">Live Feeds</div>
<svg class="a" style="left:735px;top:218px" width="30" height="30" viewBox="0 0 30 30"><path d="M10.7 12.8 V10.2 A3 3 0 0 1 16.7 10.2 V12.8" fill="none" stroke="#e0519b" stroke-width="1.8"/><rect x="8" y="12.2" width="11.5" height="10.7" rx="1.3" fill="#e0519b"/><circle cx="13.7" cy="17.5" r="1.4" fill="#fff"/></svg>
<div class="a" style="left:791px;top:227.41px;font-size:13.1px;line-height:13.1px;color:#333;font-weight:normal;font-family:'Liberation Sans',sans-serif;-webkit-text-stroke:0.4px #333">Live Stats</div>
<div class="a" style="left:885px;top:227.83px;font-size:12.6px;line-height:12.6px;color:#666;font-weight:normal;font-family:'Liberation Sans',sans-serif;-webkit-text-stroke:0.4px #666">Revenue</div>
<div class="a" style="left:772px;top:254px;width:95px;height:2px;background:#886ab5;"></div>
<svg class="a" style="left:0;top:0" width="1010" height="408" viewBox="0 0 1010 408">
<g stroke="#ececec" stroke-width="1">
<path d="M342.5 280.5 H682 M342.5 324 H682 M342.5 367 H682 M342.5 410 H682"/>
<path d="M342.5 280 V408 M427.5 280 V408 M513 280 V408 M598 280 V408"/><path d="M681.5 280 V408" stroke="#f3f3f3"/>
</g>
<defs><linearGradient id="cg" gradientUnits="userSpaceOnUse" x1="0" y1="329" x2="0" y2="408"><stop offset="0" stop-color="#e6e0ef"/><stop offset="1" stop-color="#c2b6d8"/></linearGradient></defs>
<path d="M342.7,378.8 L346.2,385.0 L348.0,379.3 L350.7,384.2 L355.1,387.7 L358.7,384.2 L360.5,385.0 L363.2,393.0 L365.0,393.0 L366.7,399.3 L368.5,399.8 L370.3,408.2 L375.6,408.2 L379.2,396.6 L383.7,387.7 L387.2,383.8 L390.8,396.6 L393.5,392.2 L397.0,403.4 L400.6,390.9 L402.4,400.2 L404.2,400.2 L406.0,393.0 L408.6,393.0 L410.4,395.7 L414.9,371.7 L420.2,343.2 L422.9,351.2 L424.7,342.3 L427.3,360.1 L430.9,345.0 L435.3,359.2 L437.1,359.2 L440.7,342.3 L443.4,345.0 L445.1,345.0 L447.8,332.5 L451.4,348.9 L453.2,340.5 L455.0,348.5 L458.5,339.2 L461.2,346.7 L463.3,353.0 L466.5,341.7 L469.2,344.0 L473.7,332.8 L475.5,341.0 L477.2,335.7 L480.8,333.4 L484.0,329.3 L487.9,337.8 L489.7,346.7 L491.5,345.0 L492.7,346.7 L494.2,339.6 L495.9,343.2 L497.7,333.4 L501.3,353.9 L504.0,355.3 L506.1,361.3 L507.9,352.1 L510.2,361.9 L513.6,357.4 L516.2,361.9 L518.0,356.5 L519.8,358.3 L522.5,352.4 L526.0,367.8 L531.4,347.1 L535.8,360.1 L538.5,351.2 L541.7,340.5 L545.3,356.5 L547.1,350.7 L549.2,353.0 L551.9,343.5 L553.7,347.6 L555.4,345.8 L559.0,361.9 L563.5,378.8 L567.9,358.3 L570.6,365.4 L572.0,357.4 L574.2,365.4 L577.4,372.0 L581.3,357.4 L584.0,354.8 L585.7,357.4 L590.6,341.4 L592.9,351.7 L594.7,353.0 L597.3,362.8 L599.1,366.3 L603.6,383.3 L606.2,381.5 L607.7,389.1 L609.8,379.7 L611.6,382.4 L613.0,379.7 L616.9,394.5 L619.6,389.5 L625.0,402.9 L627.6,402.0 L629.9,400.2 L632.1,408.2 L636.5,407.3 L645.0,418.0 L690.0,440.0 L690,420 L342.7,420 Z" fill="url(#cg)" fill-opacity=".88"/>
<path d="M342.7,378.8 L346.2,385.0 L348.0,379.3 L350.7,384.2 L355.1,387.7 L358.7,384.2 L360.5,385.0 L363.2,393.0 L365.0,393.0 L366.7,399.3 L368.5,399.8 L370.3,408.2 L375.6,408.2 L379.2,396.6 L383.7,387.7 L387.2,383.8 L390.8,396.6 L393.5,392.2 L397.0,403.4 L400.6,390.9 L402.4,400.2 L404.2,400.2 L406.0,393.0 L408.6,393.0 L410.4,395.7 L414.9,371.7 L420.2,343.2 L422.9,351.2 L424.7,342.3 L427.3,360.1 L430.9,345.0 L435.3,359.2 L437.1,359.2 L440.7,342.3 L443.4,345.0 L445.1,345.0 L447.8,332.5 L451.4,348.9 L453.2,340.5 L455.0,348.5 L458.5,339.2 L461.2,346.7 L463.3,353.0 L466.5,341.7 L469.2,344.0 L473.7,332.8 L475.5,341.0 L477.2,335.7 L480.8,333.4 L484.0,329.3 L487.9,337.8 L489.7,346.7 L491.5,345.0 L492.7,346.7 L494.2,339.6 L495.9,343.2 L497.7,333.4 L501.3,353.9 L504.0,355.3 L506.1,361.3 L507.9,352.1 L510.2,361.9 L513.6,357.4 L516.2,361.9 L518.0,356.5 L519.8,358.3 L522.5,352.4 L526.0,367.8 L531.4,347.1 L535.8,360.1 L538.5,351.2 L541.7,340.5 L545.3,356.5 L547.1,350.7 L549.2,353.0 L551.9,343.5 L553.7,347.6 L555.4,345.8 L559.0,361.9 L563.5,378.8 L567.9,358.3 L570.6,365.4 L572.0,357.4 L574.2,365.4 L577.4,372.0 L581.3,357.4 L584.0,354.8 L585.7,357.4 L590.6,341.4 L592.9,351.7 L594.7,353.0 L597.3,362.8 L599.1,366.3 L603.6,383.3 L606.2,381.5 L607.7,389.1 L609.8,379.7 L611.6,382.4 L613.0,379.7 L616.9,394.5 L619.6,389.5 L625.0,402.9 L627.6,402.0 L629.9,400.2 L632.1,408.2 L636.5,407.3 L645.0,418.0 L690.0,440.0" fill="none" stroke="#a898cb" stroke-width="1.3"/>
</svg>
<div class="a" style="left:320px;top:276.11px;font-size:10.5px;line-height:10.5px;color:#888;font-weight:normal;font-family:'Liberation Sans',sans-serif;">100</div>
<div class="a" style="left:326px;top:319.11px;font-size:10.5px;line-height:10.5px;color:#888;font-weight:normal;font-family:'Liberation Sans',sans-serif;">80</div>
<div class="a" style="left:326px;top:362.11px;font-size:10.5px;line-height:10.5px;color:#888;font-weight:normal;font-family:'Liberation Sans',sans-serif;">60</div>
<div class="a" style="left:351px;top:290.5px;width:32px;height:17px;border:2px solid #aaa;border-radius:9px;background:#fff"></div>
<div class="a" style="left:355px;top:294.5px;width:9px;height:9px;border-radius:50%;background:#a7a4bd"></div>
<div class="a" style="left:390px;top:291.74px;font-size:13.3px;line-height:13.3px;color:#555;font-weight:normal;font-family:'Liberation Sans',sans-serif;">Live Update</div>
<div class="a" style="left:705px;top:284.24px;font-size:13.3px;line-height:13.3px;color:#555;font-weight:normal;font-family:'Liberation Sans',sans-serif;">My Tasks</div>
<div class="a" style="left:897px;top:284.24px;font-size:13.3px;line-height:13.3px;color:#555;font-weight:normal;font-family:'Liberation Sans',sans-serif;">130 / 500</div>
<div class="a" style="left:705px;top:300px;width:248px;height:8px;background:#f2f2f2;border-radius:4px"></div>
<div class="a" style="left:705px;top:300px;width:161px;height:8px;background:#505050;border-radius:4px 0 0 4px"></div>
<div class="a" style="left:705px;top:327.04px;font-size:13.3px;line-height:13.3px;color:#555;font-weight:normal;font-family:'Liberation Sans',sans-serif;">Transfered</div>
<div class="a" style="left:912px;top:327.04px;font-size:13.3px;line-height:13.3px;color:#555;font-weight:normal;font-family:'Liberation Sans',sans-serif;">440 TB</div>
<div class="a" style="left:705px;top:343px;width:248px;height:8px;background:#f2f2f2;border-radius:4px"></div>
<div class="a" style="left:705px;top:343px;width:84px;height:8px;background:#6fc2b2;border-radius:4px 0 0 4px"></div>
<div class="a" style="left:705px;top:370.44px;font-size:13.3px;line-height:13.3px;color:#555;font-weight:normal;font-family:'Liberation Sans',sans-serif;">Bugs Squashed</div>
<div class="a" style="left:925px;top:370.44px;font-size:13.3px;line-height:13.3px;color:#555;font-weight:normal;font-family:'Liberation Sans',sans-serif;">77%</div>
<div class="a" style="left:705px;top:386px;width:248px;height:8px;background:#f2f2f2;border-radius:4px"></div>
<div class="a" style="left:705px;top:386px;width:191px;height:8px;background:#6699e8;border-radius:4px 0 0 4px"></div>
<div class="a" style="left:933px;top:294px;width:45px;height:45px;border-radius:50%;background:#7f63b6;box-shadow:0 1px 10px 2px rgba(0,0,0,.1)"></div>
<div class="a" style="left:945px;top:306px;width:5px;height:5px;background:#fff;"></div>
<div class="a" style="left:945px;top:314px;width:5px;height:5px;background:#fff;"></div>
<div class="a" style="left:945px;top:322px;width:5px;height:5px;background:#fff;"></div>
<div class="a" style="left:953px;top:306px;width:5px;height:5px;background:#fff;"></div>
<div class="a" style="left:953px;top:314px;width:5px;height:5px;background:#fff;"></div>
<div class="a" style="left:953px;top:322px;width:5px;height:5px;background:#fff;"></div>
<div class="a" style="left:961px;top:306px;width:5px;height:5px;background:#fff;"></div>
<div class="a" style="left:961px;top:314px;width:5px;height:5px;background:#fff;"></div>
<div class="a" style="left:961px;top:322px;width:5px;height:5px;background:#fff;"></div>
<div class="a" style="left:0px;top:408px;width:1010px;height:307px;background:#f3f3f3;"></div>
<div class="a" style="left:0px;top:408px;width:1010px;height:1px;background:#cccccc;"></div>
<div class="a" style="left:0px;top:435px;width:1010px;height:1px;background:#cfcfcf;"></div>
<svg class="a" style="left:9px;top:416px" width="16" height="14" viewBox="0 0 16 14" fill="none" stroke="#6e6e6e" stroke-width="1.5">
<path d="M6 12.5 H1.5 V1.5 H13 V5.5"/><path d="M7.5 5.5 L8.5 13 L10.3 10.8 L12.8 13.3 L13.8 12.3 L11.3 9.8 L13.5 8 Z" fill="#6e6e6e" stroke="none"/></svg>
<svg class="a" style="left:35px;top:414px" width="17" height="17" viewBox="0 0 17 17" fill="none" stroke="#6e6e6e" stroke-width="1.5">
<rect x="4.75" y="1" width="11" height="15" rx="1"/><rect x="1" y="7" width="6" height="9" fill="#f3f3f3"/></svg>
<div class="a" style="left:62px;top:414px;width:1px;height:15px;background:#cfcfcf;"></div>
<div class="a" style="left:81px;top:417.40px;font-size:11.7px;line-height:11.7px;color:#5a5a5a;font-weight:normal;font-family:'Liberation Sans',sans-serif;">Elements</div>
<div class="a" style="left:152px;top:417.40px;font-size:11.7px;line-height:11.7px;color:#5a5a5a;font-weight:normal;font-family:'Liberation Sans',sans-serif;">Console</div>
<div class="a" style="left:218px;top:417.40px;font-size:11.7px;line-height:11.7px;color:#333;font-weight:normal;font-family:'Liberation Sans',sans-serif;">Sources</div>
<div class="a" style="left:283px;top:417.40px;font-size:11.7px;line-height:11.7px;color:#5a5a5a;font-weight:normal;font-family:'Liberation Sans',sans-serif;">Network</div>
<div class="a" style="left:352px;top:417.40px;font-size:11.7px;line-height:11.7px;color:#5a5a5a;font-weight:normal;font-family:'Liberation Sans',sans-serif;">Performance</div>
<div class="a" style="left:442px;top:417.40px;font-size:11.7px;line-height:11.7px;color:#5a5a5a;font-weight:normal;font-family:'Liberation Sans',sans-serif;">Memory</div>
<div class="a" style="left:510px;top:417.40px;font-size:11.7px;line-height:11.7px;color:#5a5a5a;font-weight:normal;font-family:'Liberation Sans',sans-serif;">Application</div>
<div class="a" style="left:594px;top:417.40px;font-size:11.7px;line-height:11.7px;color:#5a5a5a;font-weight:normal;font-family:'Liberation Sans',sans-serif;">Security</div>
<div class="a" style="left:660px;top:417.40px;font-size:11.7px;line-height:11.7px;color:#5a5a5a;font-weight:normal;font-family:'Liberation Sans',sans-serif;">Audits</div>
<div class="a" style="left:717px;top:417.40px;font-size:11.7px;line-height:11.7px;color:#5a5a5a;font-weight:normal;font-family:'Liberation Sans',sans-serif;">AdBlock</div>
<div class="a" style="left:206px;top:433px;width:65px;height:2px;background:#3879d9;"></div>
<div class="a" style="left:946px;top:414px;width:1px;height:15px;background:#cfcfcf;"></div>
<svg class="a" style="left:963px;top:415px" width="6" height="15"><circle cx="3" cy="2" r="1.5" fill="#6e6e6e"/><circle cx="3" cy="7.5" r="1.5" fill="#6e6e6e"/><circle cx="3" cy="13" r="1.5" fill="#6e6e6e"/></svg>
<svg class="a" style="left:988px;top:416px" width="12" height="12"><path d="M1,1 L11,11 M11,1 L1,11" stroke="#6e6e6e" stroke-width="1.6"/></svg>
<div class="a" style="left:0px;top:462px;width:1010px;height:1px;background:#cfcfcf;"></div>
<div class="a" style="left:10px;top:444.52px;font-size:11.2px;line-height:11.2px;color:#333;font-weight:normal;font-family:'Liberation Sans',sans-serif;">Page</div>
<div class="a" style="left:0px;top:460px;width:45px;height:2px;background:#3879d9;"></div>
<div class="a" style="left:55px;top:444.52px;font-size:11.2px;line-height:11.2px;color:#5a5a5a;font-weight:normal;font-family:'Liberation Sans',sans-serif;">Filesystem</div>
<svg class="a" style="left:127px;top:444px" width="10" height="10"><path d="M1,1 L4.5,5 L1,9 M5.5,1 L9,5 L5.5,9" stroke="#555" fill="none" stroke-width="1.3"/></svg>
<svg class="a" style="left:205px;top:442px" width="6" height="15"><circle cx="3" cy="2" r="1.5" fill="#6e6e6e"/><circle cx="3" cy="7.5" r="1.5" fill="#6e6e6e"/><circle cx="3" cy="13" r="1.5" fill="#6e6e6e"/></svg>
<div class="a" style="left:224px;top:436px;width:1px;height:279px;background:#cfcfcf;"></div>
<svg class="a" style="left:233px;top:443px" width="16" height="14" viewBox="0 0 16 14" fill="none" stroke="#6e6e6e" stroke-width="1.2">
<rect x="0.6" y="0.6" width="14.8" height="12.8"/><path d="M4.5 1 V13"/><path d="M11.5 3.5 L7.5 7 L11.5 10.5 Z" fill="#6e6e6e"/></svg>
<div class="a" style="left:263px;top:445.10px;font-size:11.1px;line-height:11.1px;color:#333;font-weight:normal;font-family:'Liberation Sans',sans-serif;">_placeholders.scss</div>
<svg class="a" style="left:364px;top:446px" width="8" height="8"><path d="M1,1 L7,7 M7,1 L1,7" stroke="#666" stroke-width="1.4"/></svg>
<div class="a" style="left:253px;top:460px;width:124px;height:2px;background:#3879d9;"></div>
<div class="a" style="left:388px;top:445.10px;font-size:11.1px;line-height:11.1px;color:#5a5a5a;font-weight:normal;font-family:'Liberation Sans',sans-serif;">_nav.scss</div>
<div class="a" style="left:464px;top:444.77px;font-size:11.5px;line-height:11.5px;color:#5a5a5a;font-weight:normal;font-family:'Liberation Sans',sans-serif;">_page-component…con-stack.scss</div>
<svg class="a" style="left:671px;top:444px" width="10" height="10"><path d="M1,1 L4.5,5 L1,9 M5.5,1 L9,5 L5.5,9" stroke="#555" fill="none" stroke-width="1.3"/></svg>
<svg class="a" style="left:762px;top:443px" width="16" height="14" viewBox="0 0 16 14" fill="none" stroke="#6e6e6e" stroke-width="1.2">
<rect x="0.6" y="0.6" width="14.8" height="12.8"/><path d="M11.5 1 V13"/><path d="M4.5 3.5 L8.5 7 L4.5 10.5 Z" fill="#6e6e6e"/></svg>
<div class="a" style="left:785px;top:436px;width:1px;height:279px;background:#cfcfcf;"></div>
<div class="a" style="left:797px;top:445px;width:3px;height:9px;background:#5a5a5a"></div><div class="a" style="left:804px;top:445px;width:3px;height:9px;background:#5a5a5a"></div>
<svg class="a" style="left:821px;top:443px" width="19" height="12" viewBox="0 0 19 12"><path d="M2 8 C3 2 14 1 16 7" fill="none" stroke="#b5b5b5" stroke-width="2"/><path d="M13 7 L18 5 L17 10 Z" fill="#b5b5b5"/><circle cx="9" cy="9.5" r="1.8" fill="#b5b5b5"/></svg>
<svg class="a" style="left:853px;top:441px" width="10" height="16" viewBox="0 0 10 16"><path d="M5 1 V8" stroke="#b5b5b5" stroke-width="2"/><path d="M1.5 6 L5 10 L8.5 6 Z" fill="#b5b5b5"/><circle cx="5" cy="13.5" r="1.8" fill="#b5b5b5"/></svg>
<svg class="a" style="left:881px;top:441px" width="10" height="16" viewBox="0 0 10 16"><path d="M5 4 V11" stroke="#b5b5b5" stroke-width="2"/><path d="M1.5 6 L5 1.5 L8.5 6 Z" fill="#b5b5b5"/><circle cx="5" cy="13.5" r="1.8" fill="#b5b5b5"/></svg>
<svg class="a" style="left:906px;top:444px" width="16" height="10" viewBox="0 0 16 10"><path d="M1 5 H7" stroke="#b5b5b5" stroke-width="2"/><path d="M6 1.5 L10 5 L6 8.5 Z" fill="#b5b5b5"/><circle cx="13.5" cy="5" r="1.8" fill="#b5b5b5"/></svg>
<div class="a" style="left:932px;top:442px;width:1px;height:15px;background:#cfcfcf;"></div>
<svg class="a" style="left:941px;top:440px" width="19" height="17" viewBox="0 0 19 17"><path d="M1 3 H12 L18 8.5 L12 14 H1 Z" fill="#5a5a5a"/><path d="M3 16.5 L15 0.5" stroke="#f3f3f3" stroke-width="3"/><path d="M2 16 L14 0" stroke="#5a5a5a" stroke-width="1.6"/></svg>
<svg class="a" style="left:971px;top:441px" width="16" height="16" viewBox="0 0 16 16"><path d="M4.7 0.5 H11.3 L15.5 4.7 V11.3 L11.3 15.5 H4.7 L0.5 11.3 V4.7 Z" fill="#5a5a5a"/><rect x="5" y="4.5" width="2" height="7" fill="#f3f3f3"/><rect x="9" y="4.5" width="2" height="7" fill="#f3f3f3"/></svg>
<svg class="a" style="left:5px;top:473px" width="8" height="6"><path d="M0,0 H8 L4,6 Z" fill="#6e6e6e"/></svg>
<svg class="a" style="left:18px;top:469px" width="14" height="12" viewBox="0 0 14 12"><rect x="0.75" y="0.75" width="12.5" height="10.5" fill="none" stroke="#6e6e6e" stroke-width="1.5"/><rect x="0.75" y="0.75" width="12.5" height="2" fill="#6e6e6e"/></svg>
<div class="a" style="left:37px;top:470.10px;font-size:11.7px;line-height:11.7px;color:#333;font-weight:normal;font-family:'Liberation Sans',sans-serif;">top</div>
<svg class="a" style="left:17px;top:493px" width="8" height="6"><path d="M0,0 H8 L4,6 Z" fill="#6e6e6e"/></svg>
<svg class="a" style="left:26px;top:489px" width="19" height="13" viewBox="0 0 19 13"><path d="M4.5 12 C2 12 1 10.5 1 8.8 C1 7 2.5 5.7 4.3 5.8 C4.8 3 7 1 9.8 1 C12.8 1 15 3.3 15 6 C17 6.2 18 7.5 18 9 C18 10.8 16.8 12 15 12 Z" fill="none" stroke="#6e6e6e" stroke-width="1.4"/></svg>
<div class="a" style="left:49px;top:490.10px;font-size:11.7px;line-height:11.7px;color:#333;font-weight:normal;font-family:'Liberation Sans',sans-serif;">localhost:4000</div>
<svg class="a" style="left:30px;top:511px" width="6" height="8"><path d="M0,0 V8 L6,4 Z" fill="#6e6e6e"/></svg>
<svg class="a" style="left:42px;top:510px" width="15" height="12" viewBox="0 0 15 12"><path d="M0 0 H6 L8 2 H15 V12 H0 Z" fill="#8fb3e8"/></svg>
<div class="a" style="left:61px;top:510.10px;font-size:11.7px;line-height:11.7px;color:#333;font-weight:normal;font-family:'Liberation Sans',sans-serif;">css</div>
<svg class="a" style="left:30px;top:531px" width="6" height="8"><path d="M0,0 V8 L6,4 Z" fill="#6e6e6e"/></svg>
<svg class="a" style="left:42px;top:530px" width="15" height="12" viewBox="0 0 15 12"><path d="M0 0 H6 L8 2 H15 V12 H0 Z" fill="#8fb3e8"/></svg>
<div class="a" style="left:61px;top:530.10px;font-size:11.7px;line-height:11.7px;color:#333;font-weight:normal;font-family:'Liberation Sans',sans-serif;">js</div>
<svg class="a" style="left:30px;top:551px" width="6" height="8"><path d="M0,0 V8 L6,4 Z" fill="#6e6e6e"/></svg>
<svg class="a" style="left:42px;top:550px" width="15" height="12" viewBox="0 0 15 12"><path d="M0 0 H6 L8 2 H15 V12 H0 Z" fill="#d9994f"/></svg>
<div class="a" style="left:61px;top:550.10px;font-size:11.7px;line-height:11.7px;color:#333;font-weight:normal;font-family:'Liberation Sans',sans-serif;font-style:italic;">custom/webfonts</div>
<svg class="a" style="left:30px;top:571px" width="6" height="8"><path d="M0,0 V8 L6,4 Z" fill="#6e6e6e"/></svg>
<svg class="a" style="left:42px;top:570px" width="15" height="12" viewBox="0 0 15 12"><path d="M0 0 H6 L8 2 H15 V12 H0 Z" fill="#d9994f"/></svg>
<div class="a" style="left:61px;top:570.10px;font-size:11.7px;line-height:11.7px;color:#333;font-weight:normal;font-family:'Liberation Sans',sans-serif;font-style:italic;">node_modules/bootstrap/scss</div>
<svg class="a" style="left:30px;top:591px" width="6" height="8"><path d="M0,0 V8 L6,4 Z" fill="#6e6e6e"/></svg>
<svg class="a" style="left:42px;top:590px" width="15" height="12" viewBox="0 0 15 12"><path d="M0 0 H6 L8 2 H15 V12 H0 Z" fill="#d9994f"/></svg>
<div class="a" style="left:61px;top:590.10px;font-size:11.7px;line-height:11.7px;color:#333;font-weight:normal;font-family:'Liberation Sans',sans-serif;font-style:italic;">scss</div>
<div class="a" style="left:0px;top:605px;width:224px;height:20px;background:#dcdcdc;"></div>
<svg class="a" style="left:42px;top:607px" width="12" height="16" viewBox="0 0 12 16"><path d="M0 0 H8 L12 4 V16 H0 Z" fill="#a8a8a8"/><path d="M8 0 V4 H12" fill="#d5d5d5"/></svg>
<div class="a" style="left:61px;top:610.10px;font-size:11.7px;line-height:11.7px;color:#5a5a5a;font-weight:normal;font-family:'Liberation Sans',sans-serif;">intel_analytics_dashboard.html</div>
<svg class="a" style="left:18px;top:631px" width="6" height="8"><path d="M0,0 V8 L6,4 Z" fill="#6e6e6e"/></svg>
<svg class="a" style="left:27px;top:629px" width="19" height="13" viewBox="0 0 19 13"><path d="M4.5 12 C2 12 1 10.5 1 8.8 C1 7 2.5 5.7 4.3 5.8 C4.8 3 7 1 9.8 1 C12.8 1 15 3.3 15 6 C17 6.2 18 7.5 18 9 C18 10.8 16.8 12 15 12 Z" fill="none" stroke="#6e6e6e" stroke-width="1.4"/></svg>
<div class="a" style="left:49px;top:630.10px;font-size:11.7px;line-height:11.7px;color:#333;font-weight:normal;font-family:'Liberation Sans',sans-serif;">fonts.googleapis.com</div>
<svg class="a" style="left:18px;top:651px" width="6" height="8"><path d="M0,0 V8 L6,4 Z" fill="#6e6e6e"/></svg>
<svg class="a" style="left:27px;top:649px" width="19" height="13" viewBox="0 0 19 13"><path d="M4.5 12 C2 12 1 10.5 1 8.8 C1 7 2.5 5.7 4.3 5.8 C4.8 3 7 1 9.8 1 C12.8 1 15 3.3 15 6 C17 6.2 18 7.5 18 9 C18 10.8 16.8 12 15 12 Z" fill="none" stroke="#6e6e6e" stroke-width="1.4"/></svg>
<div class="a" style="left:49px;top:650.10px;font-size:11.7px;line-height:11.7px;color:#333;font-weight:normal;font-family:'Liberation Sans',sans-serif;">fonts.gstatic.com</div>
<svg class="a" style="left:18px;top:671px" width="6" height="8"><path d="M0,0 V8 L6,4 Z" fill="#6e6e6e"/></svg>
<svg class="a" style="left:27px;top:669px" width="19" height="13" viewBox="0 0 19 13"><path d="M4.5 12 C2 12 1 10.5 1 8.8 C1 7 2.5 5.7 4.3 5.8 C4.8 3 7 1 9.8 1 C12.8 1 15 3.3 15 6 C17 6.2 18 7.5 18 9 C18 10.8 16.8 12 15 12 Z" fill="none" stroke="#6e6e6e" stroke-width="1.4"/></svg>
<div class="a" style="left:49px;top:670.10px;font-size:11.7px;line-height:11.7px;color:#333;font-weight:normal;font-family:'Liberation Sans',sans-serif;">lipis.github.io</div>
<div class="a" style="left:225px;top:463px;width:560px;height:226px;background:#fff;"></div>
<div class="a" style="left:256px;top:463px;width:1px;height:209px;background:#dedede;"></div>
<div class="a" style="left:240px;top:463.40px;font-size:11.7px;line-height:11.7px;color:#7d7d7d;font-weight:normal;font-family:'Liberation Sans',sans-serif;width:14px;text-align:right;left:239px">21</div>
<div class="a" style="left:261px;top:464.13px;font-size:11px;line-height:11px;color:#333;font-weight:normal;font-family:'Liberation Mono',monospace;white-space:pre;width:508px;overflow:hidden"><span style="color:#236e25">        width: 100%;</span></div>
<div class="a" style="left:240px;top:477.40px;font-size:11.7px;line-height:11.7px;color:#7d7d7d;font-weight:normal;font-family:'Liberation Sans',sans-serif;width:14px;text-align:right;left:239px">22</div>
<div class="a" style="left:261px;top:478.13px;font-size:11px;line-height:11px;color:#333;font-weight:normal;font-family:'Liberation Mono',monospace;white-space:pre;width:508px;overflow:hidden"><span style="color:#236e25">        background-position: center center;</span></div>
<div class="a" style="left:240px;top:491.40px;font-size:11.7px;line-height:11.7px;color:#7d7d7d;font-weight:normal;font-family:'Liberation Sans',sans-serif;width:14px;text-align:right;left:239px">23</div>
<div class="a" style="left:261px;top:492.13px;font-size:11px;line-height:11px;color:#333;font-weight:normal;font-family:'Liberation Mono',monospace;white-space:pre;width:508px;overflow:hidden"><span style="color:#236e25">        background-size: cover;</span></div>
<div class="a" style="left:240px;top:505.40px;font-size:11.7px;line-height:11.7px;color:#7d7d7d;font-weight:normal;font-family:'Liberation Sans',sans-serif;width:14px;text-align:right;left:239px">24</div>
<div class="a" style="left:261px;top:506.13px;font-size:11px;line-height:11px;color:#333;font-weight:normal;font-family:'Liberation Mono',monospace;white-space:pre;width:508px;overflow:hidden"><span style="color:#236e25">        background-repeat: no-repeat;</span></div>
<div class="a" style="left:240px;top:519.40px;font-size:11.7px;line-height:11.7px;color:#7d7d7d;font-weight:normal;font-family:'Liberation Sans',sans-serif;width:14px;text-align:right;left:239px">25</div>
<div class="a" style="left:261px;top:520.13px;font-size:11px;line-height:11px;color:#333;font-weight:normal;font-family:'Liberation Mono',monospace;white-space:pre;width:508px;overflow:hidden"><span style="color:#236e25">}</span></div>
<div class="a" style="left:240px;top:533.40px;font-size:11.7px;line-height:11.7px;color:#7d7d7d;font-weight:normal;font-family:'Liberation Sans',sans-serif;width:14px;text-align:right;left:239px">26</div>
<div class="a" style="left:240px;top:547.40px;font-size:11.7px;line-height:11.7px;color:#7d7d7d;font-weight:normal;font-family:'Liberation Sans',sans-serif;width:14px;text-align:right;left:239px">27</div>
<div class="a" style="left:261px;top:548.13px;font-size:11px;line-height:11px;color:#333;font-weight:normal;font-family:'Liberation Mono',monospace;white-space:pre;width:508px;overflow:hidden"><span style="color:#236e25">*/</span></div>
<div class="a" style="left:240px;top:561.40px;font-size:11.7px;line-height:11.7px;color:#7d7d7d;font-weight:normal;font-family:'Liberation Sans',sans-serif;width:14px;text-align:right;left:239px">28</div>
<div class="a" style="left:240px;top:575.40px;font-size:11.7px;line-height:11.7px;color:#7d7d7d;font-weight:normal;font-family:'Liberation Sans',sans-serif;width:14px;text-align:right;left:239px">29</div>
<div class="a" style="left:261px;top:576.13px;font-size:11px;line-height:11px;color:#333;font-weight:normal;font-family:'Liberation Mono',monospace;white-space:pre;width:508px;overflow:hidden"><span style="color:#222">%nav-bg {</span></div>
<div class="a" style="left:240px;top:589.40px;font-size:11.7px;line-height:11.7px;color:#7d7d7d;font-weight:normal;font-family:'Liberation Sans',sans-serif;width:14px;text-align:right;left:239px">30</div>
<div class="a" style="left:261px;top:590.13px;font-size:11px;line-height:11px;color:#333;font-weight:normal;font-family:'Liberation Mono',monospace;white-space:pre;width:508px;overflow:hidden"><span style="color:#222">    </span><span style="color:#a1331f">background-image</span><span style="color:#333">: </span><span style="color:#a1331f">-webkit-linear-gradient(</span><span style="color:#1c00cf">270deg</span><span style="color:#333">, </span><span style="color:#15136f">$nav-background-shade</span><span style="color:#333">,</span></div>
<div class="a" style="left:240px;top:603.40px;font-size:11.7px;line-height:11.7px;color:#7d7d7d;font-weight:normal;font-family:'Liberation Sans',sans-serif;width:14px;text-align:right;left:239px">31</div>
<div class="a" style="left:261px;top:604.13px;font-size:11px;line-height:11px;color:#333;font-weight:normal;font-family:'Liberation Mono',monospace;white-space:pre;width:508px;overflow:hidden"><span style="color:#222">    </span><span style="color:#a1331f">background-image</span><span style="color:#333">: </span><span style="color:#a1331f">linear-gradient(</span><span style="color:#1c00cf">270deg</span><span style="color:#333">, </span><span style="color:#15136f">$nav-background-shade</span><span style="color:#333">, </span><span style="display:inline-block;width:10px;height:10px;border:1px solid #aaa;vertical-align:-1px;margin-right:2px;background:linear-gradient(45deg,#ccc 25%,transparent 25%,transparent 75%,#ccc 75%),#fff"></span><span style="color:#5b7f8c">transp</span></div>
<div class="a" style="left:240px;top:617.40px;font-size:11.7px;line-height:11.7px;color:#7d7d7d;font-weight:normal;font-family:'Liberation Sans',sans-serif;width:14px;text-align:right;left:239px">32</div>
<div class="a" style="left:261px;top:618.13px;font-size:11px;line-height:11px;color:#333;font-weight:normal;font-family:'Liberation Mono',monospace;white-space:pre;width:508px;overflow:hidden"><span style="color:#222">    </span><span style="color:#a1331f">background-color</span><span style="color:#333">: </span><span style="color:#15136f">$nav-background</span><span style="color:#333">;</span></div>
<div class="a" style="left:240px;top:631.40px;font-size:11.7px;line-height:11.7px;color:#7d7d7d;font-weight:normal;font-family:'Liberation Sans',sans-serif;width:14px;text-align:right;left:239px">33</div>
<div class="a" style="left:261px;top:632.13px;font-size:11px;line-height:11px;color:#333;font-weight:normal;font-family:'Liberation Mono',monospace;white-space:pre;width:508px;overflow:hidden"><span style="color:#222">}</span></div>
<div class="a" style="left:240px;top:645.40px;font-size:11.7px;line-height:11.7px;color:#7d7d7d;font-weight:normal;font-family:'Liberation Sans',sans-serif;width:14px;text-align:right;left:239px">34</div>
<div class="a" style="left:240px;top:659.40px;font-size:11.7px;line-height:11.7px;color:#7d7d7d;font-weight:normal;font-family:'Liberation Sans',sans-serif;width:14px;text-align:right;left:239px">35</div>
<div class="a" style="left:261px;top:660.13px;font-size:11px;line-height:11px;color:#333;font-weight:normal;font-family:'Liberation Mono',monospace;white-space:pre;width:508px;overflow:hidden"><span style="color:#236e25">/*</span></div>
<div class="a" style="left:240px;top:673.40px;font-size:11.7px;line-height:11.7px;color:#7d7d7d;font-weight:normal;font-family:'Liberation Sans',sans-serif;width:14px;text-align:right;left:239px">36</div>
<div class="a" style="left:512px;top:617px;width:1px;height:14px;background:#000;"></div>
<div class="a" style="left:768px;top:463px;width:17px;height:209px;background:#f1f1f1;"></div>
<svg class="a" style="left:772px;top:469px" width="9" height="6"><path d="M0,5 L4.5,0 L9,5 Z" fill="#505050"/></svg>
<div class="a" style="left:770px;top:487px;width:13px;height:16px;background:#c1c1c1;"></div>
<svg class="a" style="left:772px;top:660px" width="9" height="6"><path d="M0,0 L4.5,5 L9,0 Z" fill="#505050"/></svg>
<div class="a" style="left:257px;top:672px;width:511px;height:17px;background:#f1f1f1;"></div>
<svg class="a" style="left:262px;top:676px" width="6" height="9"><path d="M5,0 L0,4.5 L5,9 Z" fill="#a3a3a3"/></svg>
<div class="a" style="left:274px;top:674px;width:202px;height:12px;background:#c1c1c1;"></div>
<svg class="a" style="left:757px;top:676px" width="6" height="9"><path d="M0,0 L5,4.5 L0,9 Z" fill="#505050"/></svg>
<div class="a" style="left:225px;top:689px;width:560px;height:1px;background:#cfcfcf;"></div>
<div class="a" style="left:225px;top:690px;width:560px;height:25px;background:#f3f3f3;"></div>
<div class="a" style="left:233px;top:697.00px;font-size:13px;line-height:13px;color:#6e6e6e;font-weight:bold;font-family:'Liberation Sans',sans-serif;letter-spacing:4px">{}</div>
<div class="a" style="left:264px;top:697.70px;font-size:11.7px;line-height:11.7px;color:#333;font-weight:normal;font-family:'Liberation Sans',sans-serif;">Line 32, Column 36</div>
<div class="a" style="left:786px;top:463px;width:207px;height:21px;background:#f3f3f3;"></div>
<svg class="a" style="left:794px;top:470px" width="6" height="8"><path d="M0,0 V8 L5,4 Z" fill="#6e6e6e"/></svg>
<div class="a" style="left:803px;top:468.10px;font-size:11.7px;line-height:11.7px;color:#333;font-weight:normal;font-family:'Liberation Sans',sans-serif;">Watch</div>
<div class="a" style="left:786px;top:484px;width:207px;height:1px;background:#d9d9d9;"></div>
<div class="a" style="left:786px;top:485px;width:207px;height:21px;background:#f3f3f3;"></div>
<svg class="a" style="left:793px;top:493px" width="8" height="7"><path d="M0,0 H8 L4,6.5 Z" fill="#6e6e6e"/></svg>
<div class="a" style="left:803px;top:490.10px;font-size:11.7px;line-height:11.7px;color:#333;font-weight:normal;font-family:'Liberation Sans',sans-serif;">Call Stack</div>
<div class="a" style="left:786px;top:506px;width:207px;height:1px;background:#d9d9d9;"></div>
<div class="a" style="left:786px;top:507px;width:207px;height:27px;background:#fff;"></div>
<div class="a" style="left:890px;top:514.60px;font-size:11.7px;line-height:11.7px;color:#888;font-weight:normal;font-family:'Liberation Sans',sans-serif;font-style:italic;transform:translateX(-50%)">Not paused</div>
<div class="a" style="left:786px;top:534px;width:207px;height:1px;background:#d9d9d9;"></div>
<div class="a" style="left:786px;top:535px;width:207px;height:21px;background:#f3f3f3;"></div>
<svg class="a" style="left:793px;top:543px" width="8" height="7"><path d="M0,0 H8 L4,6.5 Z" fill="#6e6e6e"/></svg>
<div class="a" style="left:803px;top:540.10px;font-size:11.7px;line-height:11.7px;color:#333;font-weight:normal;font-family:'Liberation Sans',sans-serif;">Scope</div>
<div class="a" style="left:786px;top:556px;width:207px;height:1px;background:#d9d9d9;"></div>
<div class="a" style="left:786px;top:557px;width:207px;height:27px;background:#fff;"></div>
<div class="a" style="left:890px;top:564.60px;font-size:11.7px;line-height:11.7px;color:#888;font-weight:normal;font-family:'Liberation Sans',sans-serif;font-style:italic;transform:translateX(-50%)">Not paused</div>
<div class="a" style="left:786px;top:584px;width:207px;height:1px;background:#d9d9d9;"></div>
<div class="a" style="left:786px;top:585px;width:207px;height:21px;background:#f3f3f3;"></div>
<svg class="a" style="left:793px;top:593px" width="8" height="7"><path d="M0,0 H8 L4,6.5 Z" fill="#6e6e6e"/></svg>
<div class="a" style="left:803px;top:590.10px;font-size:11.7px;line-height:11.7px;color:#333;font-weight:normal;font-family:'Liberation Sans',sans-serif;">Breakpoints</div>
<div class="a" style="left:786px;top:606px;width:207px;height:1px;background:#d9d9d9;"></div>
<div class="a" style="left:786px;top:607px;width:207px;height:27px;background:#fff;"></div>
<div class="a" style="left:890px;top:614.60px;font-size:11.7px;line-height:11.7px;color:#888;font-weight:normal;font-family:'Liberation Sans',sans-serif;font-style:italic;transform:translateX(-50%)">No breakpoints</div>
<div class="a" style="left:786px;top:634px;width:207px;height:1px;background:#d9d9d9;"></div>
<div class="a" style="left:786px;top:635px;width:207px;height:21px;background:#f3f3f3;"></div>
<svg class="a" style="left:794px;top:642px" width="6" height="8"><path d="M0,0 V8 L5,4 Z" fill="#6e6e6e"/></svg>
<div class="a" style="left:803px;top:640.10px;font-size:11.7px;line-height:11.7px;color:#333;font-weight:normal;font-family:'Liberation Sans',sans-serif;">XHR/fetch Breakpoints</div>
<div class="a" style="left:786px;top:656px;width:207px;height:1px;background:#d9d9d9;"></div>
<div class="a" style="left:786px;top:657px;width:207px;height:21px;background:#f3f3f3;"></div>
<svg class="a" style="left:794px;top:664px" width="6" height="8"><path d="M0,0 V8 L5,4 Z" fill="#6e6e6e"/></svg>
<div class="a" style="left:803px;top:662.10px;font-size:11.7px;line-height:11.7px;color:#333;font-weight:normal;font-family:'Liberation Sans',sans-serif;">DOM Breakpoints</div>
<div class="a" style="left:786px;top:678px;width:207px;height:1px;background:#d9d9d9;"></div>
<div class="a" style="left:786px;top:679px;width:207px;height:21px;background:#f3f3f3;"></div>
<svg class="a" style="left:794px;top:686px" width="6" height="8"><path d="M0,0 V8 L5,4 Z" fill="#6e6e6e"/></svg>
<div class="a" style="left:803px;top:684.10px;font-size:11.7px;line-height:11.7px;color:#333;font-weight:normal;font-family:'Liberation Sans',sans-serif;">Global Listeners</div>
<div class="a" style="left:786px;top:700px;width:207px;height:1px;background:#d9d9d9;"></div>
<div class="a" style="left:786px;top:701px;width:207px;height:21px;background:#f3f3f3;"></div>
<svg class="a" style="left:794px;top:708px" width="6" height="8"><path d="M0,0 V8 L5,4 Z" fill="#6e6e6e"/></svg>
<div class="a" style="left:803px;top:706.10px;font-size:11.7px;line-height:11.7px;color:#333;font-weight:normal;font-family:'Liberation Sans',sans-serif;">Event Listener Breakpoints</div>
<div class="a" style="left:786px;top:722px;width:207px;height:1px;background:#d9d9d9;"></div>
<div class="a" style="left:993px;top:463px;width:17px;height:252px;background:#f1f1f1;"></div>
<svg class="a" style="left:997px;top:468px" width="9" height="6"><path d="M0,5 L4.5,0 L9,5 Z" fill="#a3a3a3"/></svg>
<div class="a" style="left:995px;top:479px;width:13px;height:215px;background:#c1c1c1;"></div>
<svg class="a" style="left:997px;top:704px" width="9" height="6"><path d="M0,0 L4.5,5 L9,0 Z" fill="#505050"/></svg>
<svg class="a" style="left:0;top:400px" width="1010" height="315">
<ellipse cx="312.5" cy="48.5" rx="60" ry="17" fill="none" stroke="#f2070d" stroke-width="3.5"/>
<ellipse cx="460" cy="221.5" rx="69" ry="20.5" fill="none" stroke="#f2070d" stroke-width="3.5"/>
</svg>
</body></html>
